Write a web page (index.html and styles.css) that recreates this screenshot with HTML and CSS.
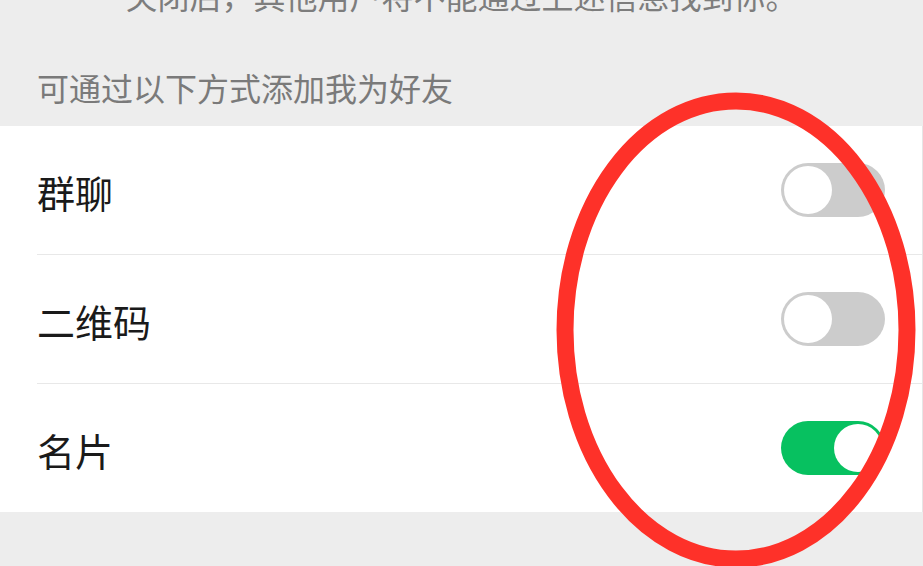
FILE: index.html
```html
<!DOCTYPE html>
<html lang="zh-CN">
<head>
<meta charset="utf-8">
<link rel="stylesheet" href="styles.css">
</head>
<body>
<div class="page">
  <div class="note">关闭后，其他用户将不能通过上述信息找到你。</div>
  <div class="group-title">可通过以下方式添加我为好友</div>
  <div class="list">
    <div class="row">
      <span class="label">群聊</span>
      <span class="switch"><span class="knob"></span></span>
    </div>
    <div class="row">
      <span class="label">二维码</span>
      <span class="switch"><span class="knob"></span></span>
    </div>
    <div class="row">
      <span class="label">名片</span>
      <span class="switch on"><span class="knob"></span></span>
    </div>
  </div>
  <svg class="mark" width="923" height="566" viewBox="0 0 923 566">
    <ellipse cx="736" cy="330" rx="171" ry="229" fill="none" stroke="#fe3129" stroke-width="17"/>
  </svg>
</div>
</body>
</html>
```
FILE: styles.css
```css
html, body {
  margin: 0;
  padding: 0;
}
body {
  background: #ededed;
  font-family: "Noto Sans CJK SC", "Noto Sans", sans-serif;
  overflow: hidden;
}
.page {
  position: relative;
  width: 923px;
  height: 566px;
  overflow: hidden;
  background: #ededed;
}
.note {
  margin-top: -21px;
  height: 32px;
  line-height: 32px;
  font-size: 32px;
  color: #7d7d7d;
  text-align: center;
  white-space: nowrap;
}
.group-title {
  margin-top: 60px;
  padding-left: 37px;
  height: 55px;
  line-height: 32px;
  font-size: 32px;
  color: #7a7a7a;
  white-space: nowrap;
}
.list {
  background: #fff;
  border-right: 1px solid #e6e6e6;
}
.row {
  height: 128px;
  display: flex;
  align-items: center;
  justify-content: space-between;
  margin-left: 37px;
  padding-right: 37px;
  border-bottom: 1px solid #e8e8e8;
}
.row:last-child {
  border-bottom: none;
}
.label {
  font-size: 38px;
  color: #1a1a1a;
  line-height: 1;
  margin-top: 4px;
}
.switch {
  position: relative;
  width: 104px;
  height: 54px;
  border-radius: 27px;
  background: #cccccc;
  box-sizing: border-box;
}
.knob {
  position: absolute;
  top: 3px;
  left: 3px;
  width: 48px;
  height: 48px;
  border-radius: 50%;
  background: #fff;
}
.switch.on {
  background: #07c160;
}
.switch.on .knob {
  left: auto;
  right: 3px;
}
.mark {
  position: absolute;
  left: 0;
  top: 0;
  pointer-events: none;
}
```
